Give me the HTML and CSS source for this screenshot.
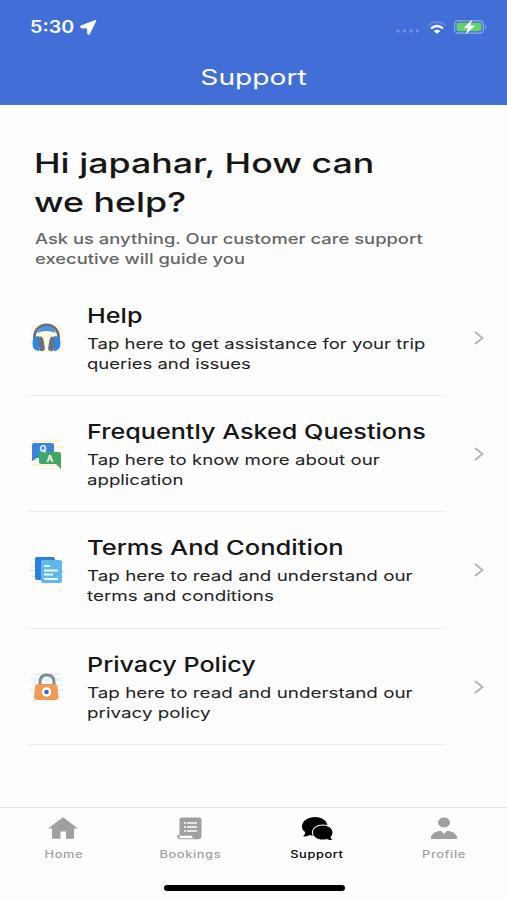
FILE: index.html
```html
<!DOCTYPE html>
<html lang="en">
<head>
  <meta charset="UTF-8" />
  <meta name="viewport" content="width=device-width, initial-scale=1.0"/>
  <title>Support</title>
  <link rel="stylesheet" href="styles.css">
</head>
<body>
  <header>
    <div class="status">
      <span class="time">5:30</span>
      <svg class="location" width="17" height="15" viewBox="0 0 17 15"><path d="M15.500 .8 1.200 6.300Q.6 7.100 1.400 7.400L7.800 7.800 8 13.500Q8.600 14.600 9.400 13.500Z" fill="#fff" stroke="#fff" stroke-width="1.500" stroke-linejoin="round"/></svg>
      <svg class="dots" width="24" height="4" viewBox="0 0 24 4" fill="#7090e1"><circle cx="2" cy="2" r="1.700"/><circle cx="8.500" cy="2" r="1.700"/><circle cx="15" cy="2" r="1.700"/><circle cx="21.500" cy="2" r="1.700"/></svg>
      <svg class="wifi" width="20" height="13" viewBox="0 0 20 13" fill="none"><path d="M1 4.500Q10-2.700 19 4.500" stroke="#6387df" stroke-width="2.200"/><path d="M4 7.400Q10 2.500 16 7.400" stroke="#fff" stroke-width="2.400"/><path d="M6.800 9.900Q10 7.700 13.200 9.900L10 12.800Z" fill="#fff"/></svg>
      <svg class="battery" width="34" height="14" viewBox="0 0 34 14"><rect x=".6" y=".9" width="28.800" height="12.200" rx="3.500" fill="none" stroke="#8faee5" stroke-width="1.100"/><rect x="2.500" y="2.700" width="25" height="8.600" rx="1.800" fill="#65d267"/><path d="M31 4.800Q33.500 7 31 9.200Z" fill="#8ca9e6"/><path d="M17.500 .6 10.200 7.800h4.200L12.500 13.400 20.300 6h-4.500Z" fill="#fff" stroke="#fff" stroke-width=".8"/></svg>
    </div>
    <div class="bar"><span>Support</span></div>
  </header>

  <main>
    <h1>Hi japahar, How can<br>we help?</h1>
    <p class="intro">Ask us anything. Our customer care support<br>executive will guide you</p>

    <ul class="menu">
      <li>
        <svg class="icon" viewBox="0 0 36 36">
          <path d="M2 5h31v5h2v5h-3v6h3v11H3v-7H1v-4h3v-8H1V8h1Z" fill="#fff8e3"/>
          <path d="M5.500 21v-4C5.500 1 29.500 1 29.500 17v4" fill="none" stroke="#686f7a" stroke-width="2.800"/>
          <path d="M8 13Q11 6 17.500 6T27 13q-9.500-4-19 0Z" fill="#4a92e2"/>
          <path d="M10 16q-6.500 0-6.500 7 0 8 7 8ZM25 16q6.500 0 6.500 7 0 8-7 8Z" fill="#2e87e4"/>
          <path d="M9 18q4-4 5.500 2l1.500 9q-2.500 4-5.500 1ZM26 18q-4-4-5.500 2L19 29q2.500 4 5.500 1Z" fill="#68717e"/>
        </svg>
        <div class="text"><h2>Help</h2><p>Tap here to get assistance for your trip<br>queries and issues</p></div>
        <svg class="arrow" viewBox="0 0 12 16"><path d="m2 2 7.500 6L2 14"/></svg>
      </li>
      <li>
        <svg class="icon" viewBox="0 0 36 36">
          <path d="M4 4h28v2H4zM1 10h34v2H1zM15 15h18v2H15zM1 23h10v2H1zM3 28h28v2H3zM10 32h23v1H10z" fill="#fbf0d2"/>
          <path d="M5 7h18q2 0 2 2v13H8l-5 3V9q0-2 2-2Z" fill="#3985d9"/>
          <path d="M12 16h18q2 0 2 2v15l-5-5H12q-2 0-2-2v-8q0-2 2-2Z" fill="#42a765"/>
          <text class="qa" x="10.500" y="16">Q</text><text class="qa" x="17.500" y="26">A</text>
        </svg>
        <div class="text"><h2>Frequently Asked Questions</h2><p class="faq">Tap here to know more about our<br>application</p></div>
        <svg class="arrow" viewBox="0 0 12 16"><path d="m2 2 7.500 6L2 14"/></svg>
      </li>
      <li class="wide">
        <svg class="icon" viewBox="0 0 36 36">
          <path d="M2 14h6v1H2zM0 18h8v1H0zM3 24h5v1H3zM32 10h3v1h-3zM31 19h5v1h-5zM31 24h3v1h-3z" fill="#f8d798"/>
          <rect x="6" y="5" width="20" height="23" rx="2" fill="#2e7edc"/>
          <rect x="12" y="8" width="21" height="23" rx="2" fill="#62b8ee"/>
          <path d="M15 14h6M15 18.500h14M15 22.500h9M15 27h14" stroke="#e9faff" stroke-width="1.800"/>
        </svg>
        <div class="text"><h2 class="terms">Terms And Condition</h2><p>Tap here to read and understand our<br>terms and conditions</p></div>
        <svg class="arrow" viewBox="0 0 12 16"><path d="m2 2 7.500 6L2 14"/></svg>
      </li>
      <li class="wide">
        <svg class="icon" viewBox="0 0 36 36">
          <path d="M4 4h14v2H4zM22 4h9v2h-9zM1 9h31v3H1zM4 15h30v2H4zM1 20h33v2H1zM3 26h29v2H3zM3 31h5v1H3z" fill="#dff6f8"/>
          <path d="M11 17v-4q0-7 7-7t7 7v4" fill="none" stroke="#858990" stroke-width="3"/>
          <path d="M9 15h17q2 0 2.500 3l1 10q0 3-3 3H8q-3 0-3-3l1-10q.500-3 3-3Z" fill="#f29b58"/>
          <circle cx="17.500" cy="23" r="4.700" fill="#fff"/><circle cx="17.500" cy="23" r="2.300" fill="#2c70c9"/>
        </svg>
        <div class="text"><h2>Privacy Policy</h2><p>Tap here to read and understand our<br>privacy policy</p></div>
        <svg class="arrow" viewBox="0 0 12 16"><path d="m2 2 7.500 6L2 14"/></svg>
      </li>
    </ul>
  </main>

  <nav>
    <a>
      <svg width="32" height="24" viewBox="0 0 32 24"><path d="M16 .8 31 12h-4v9.500q0 .8-1 .8h-7V15h-5.500v7.300H6q-1 0-1-.8V12H1Z" fill="currentColor"/></svg>
      <span>Home</span>
    </a>
    <a>
      <svg width="32" height="24" viewBox="0 0 32 24"><path d="M5.500 3q0-2 2.500-2h17q2.500 0 2.500 2v16.500q0 3.200-4 3.200H7q-4 0-4-4.200h2.500Z" fill="currentColor"/><path d="M5 19.300h13q0 2 1.500 2.400H7q-2 0-2-2.400Z" fill="#fff"/><path d="M10 6.500h2M13 6.500h10M10 10.500h2M13 10.500h10M10 14.500h2M13 14.500h10" stroke="#fff" stroke-width="1.600"/></svg>
      <span>Bookings</span>
    </a>
    <a class="active">
      <svg width="32" height="25" viewBox="0 0 32 25"><path d="M14 1c7 0 12.500 4 12.500 9.500S21 20 14 20q-3 0-5-1-3 1.800-7 1.300 2-1.500 2.300-4Q1 14 1 10.500C1 5 7 1 14 1Z" fill="currentColor"/><path d="M22 9.500c5.500 0 9.500 3 9.500 7.200q0 2.600-2 4.300.3 2 2 3-3.500.3-6-1-2 .7-4 .5c-5.500 0-9.500-3-9.500-6.800 0-4.200 4-7.200 10-7.200Z" fill="currentColor" stroke="#fdfdfd" stroke-width="2.200" paint-order="stroke"/></svg>
      <span>Support</span>
    </a>
    <a>
      <svg width="32" height="24" viewBox="0 0 32 24" fill="currentColor"><ellipse cx="16" cy="6" rx="6" ry="5"/><path d="M3 22.500v-2q1-4 6-5.500l4-.8 3 3.300 3-3.300 4 .8q5 1.500 6 5.500v2Z"/></svg>
      <span>Profile</span>
    </a>
  </nav>
  <div class="home-indicator"></div>
</body>
</html>
```
FILE: styles.css
```css
* {
  box-sizing: border-box;
  margin: 0;
  padding: 0;
}
body {
  height: 900px;
  display: flex;
  flex-direction: column;
  overflow: hidden;
  background: #fdfdfd;
  color: #161616;
  font-family: Inter, sans-serif;
}
header {
  height: 105px;
  background: #416fd7;
  color: #fff;
}
.status {
  height: 50px;
  padding: 4px 19px 0 30px;
  display: flex;
  align-items: center;
}
.time {
  width: 50px;
  font-size: 17px;
  font-weight: 600;
  transform: scaleX(1.16);
  transform-origin: left;
}
.dots {
  margin: 7px 7px 0 auto;
}
.wifi {
  margin-right: 7px;
}
.bar {
  height: 53px;
  display: flex;
  align-items: center;
  justify-content: center;
  font-size: 22px;
}
.bar span {
  transform: scaleX(1.28);
}
main {
  flex: 1;
  padding-top: 39px;
}
h1, .intro, h2, .text p {
  width: fit-content;
  white-space: nowrap;
  transform-origin: left;
}
h1 {
  margin-left: 34px;
  font-size: 27.5px;
  font-weight: 500;
  line-height: 39px;
  transform: scaleX(1.3);
}
.intro {
  margin: 7px 0 0 35px;
  color: #666;
  font-size: 14.5px;
  font-weight: 500;
  line-height: 20px;
  transform: scaleX(1.267);
}
.menu {
  margin-top: 11px;
  list-style: none;
}
.menu li {
  height: 116.2px;
  margin-left: 28px;
  padding-top: 21px;
  display: flex;
  background: linear-gradient(#ececec, #ececec) left bottom / 417px 1px no-repeat;
}
.icon {
  width: 36px;
  height: 36px;
  margin: 19px 22px 0 1px;
}
.qa {
  fill: #fff;
  font-size: 9px;
  font-weight: 700;
}
.text {
  width: 340px;
}
h2 {
  font-size: 20.5px;
  font-weight: 500;
  line-height: 30px;
  transform: scaleX(1.228);
}
h2.terms {
  transform: scaleX(1.245);
}
.text p {
  margin-top: 3px;
  color: #222;
  font-size: 14.5px;
  line-height: 20px;
  transform: scaleX(1.275);
}
.text p.faq {
  transform: scaleX(1.287);
}
.wide .text p {
  transform: scaleX(1.298);
}
.arrow {
  width: 12px;
  height: 16px;
  margin: 29px 0 0 46px;
  fill: none;
  stroke: #b5b5b5;
  stroke-width: 2;
}
nav {
  height: 67px;
  padding-top: 8px;
  display: flex;
  border-top: 1px solid #e2e2e2;
}
nav a {
  flex: 1;
  display: flex;
  flex-direction: column;
  align-items: center;
  color: #a0a0a0;
  font-size: 10.5px;
  font-weight: 500;
}
nav svg {
  height: 25px;
}
nav span {
  margin-top: 7px;
  line-height: 14px;
  letter-spacing: 0.5px;
  transform: scaleX(1.22);
}
nav .active {
  color: #000;
}
.home-indicator {
  width: 181px;
  height: 6px;
  margin: 11px auto 9px 164px;
  border-radius: 3px;
  background: #000;
}
```
